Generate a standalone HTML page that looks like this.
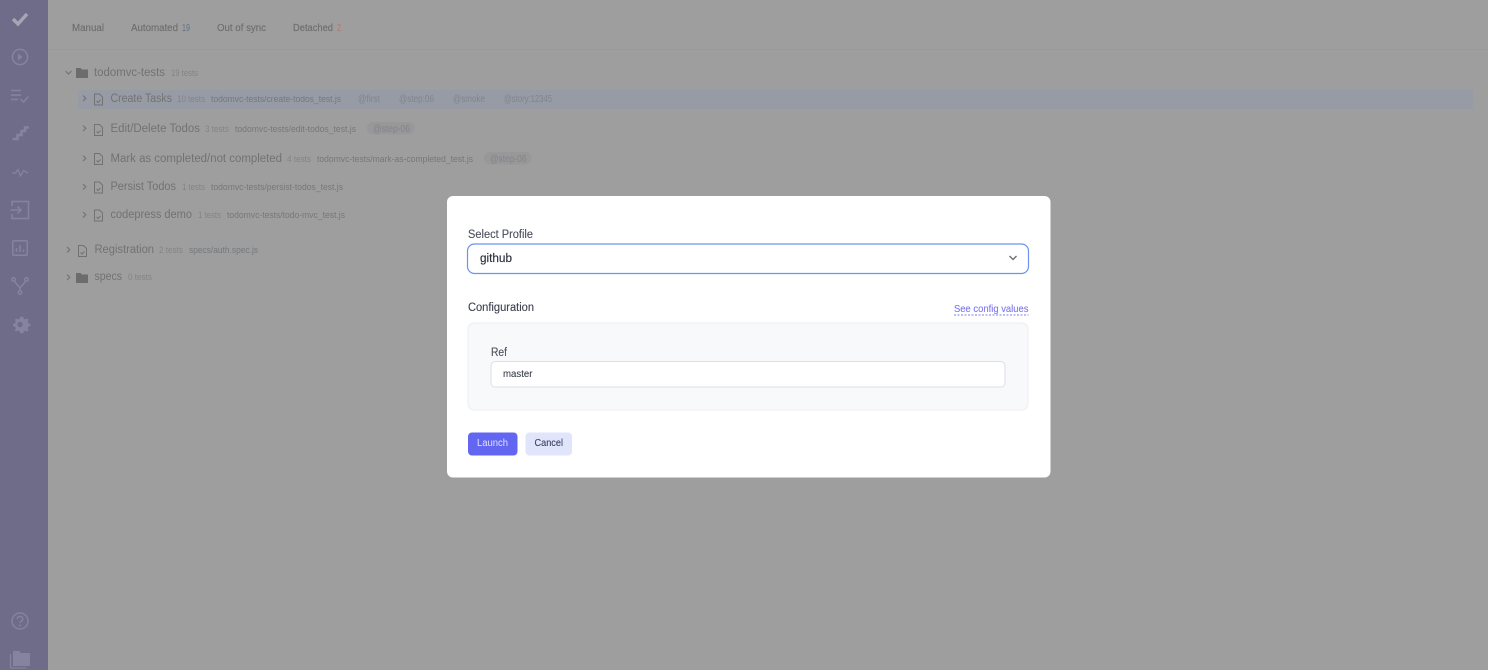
<!DOCTYPE html>
<html><head><meta charset="utf-8"><style>
html,body{margin:0;padding:0;width:1488px;height:670px;overflow:hidden;background:#9e9e9e}
svg{display:block;filter:blur(.3px)}
text{font-family:"Liberation Sans",sans-serif}
.tab{font-size:10px;fill:#6e6e6e;stroke:#6e6e6e;stroke-width:.15px}
.ttl{font-size:11.5px;fill:#727272}
.cnt{font-size:9px;fill:#848484}
.pth{font-size:9.5px;fill:#74787c}
.tag{font-size:10px;fill:#80848c}
.m{font-size:11.5px;fill:#4a4f5c;stroke:#4a4f5c;stroke-width:.12px}
</style></head><body>
<svg width="1488" height="670" viewBox="0 0 1488 670" xmlns="http://www.w3.org/2000/svg">
<rect width="1488" height="670" fill="#9e9e9e"/>
<rect width="48" height="670" fill="#6f6c8a"/>
<!-- sidebar icons -->
<path d="M13 19l5 5 9-10" fill="none" stroke="#a6a6b2" stroke-width="3.4"/>
<g fill="none" stroke="#85839d" stroke-width="1.5">
<circle cx="20" cy="57" r="7.6"/>
<path d="M18 53.500l4.500 3.500-4.500 3.500z" fill="#85839d" stroke="none"/>
<path d="M11 90.500h10M11 95h10M11 99.500h7M20.500 99l3 3 5-5.500"/>
<path d="M12.500 139h5v-4h4v-4h3.500v-3.500h4" stroke-width="2.500"/>
<path d="M12 173h3.500l2.500-3.500 2.500 6.500 3-5.500 4.500 2.500" stroke-width="1.300"/>
<path d="M12 206v-4.500h16.500v17h-16.500v-4.500"/>
<path d="M10.500 210h10M17.500 206.500l3.500 3.500-3.500 3.500"/>
<rect x="12.800" y="240.800" width="14.400" height="14.400" rx="1"/>
<path d="M16.500 252v-4M20 252v-7M23.500 252v-2.500"/>
<circle cx="13.500" cy="279.500" r="1.800"/><circle cx="26.500" cy="279.500" r="1.800"/><circle cx="20" cy="292.500" r="1.800"/>
<path d="M14.500 281.500l5.500 6.500 5.500-6.500M20 288v3"/>
<circle cx="20" cy="621" r="8"/>
<path d="M17.300 619c0-3.500 5.500-3.500 5.500 0 0 2-2.800 2-2.800 4"/>
</g>
<circle cx="20" cy="625.500" r="1" fill="#85839d"/>
<g transform="translate(20 325) scale(.88) translate(-18.500 -326)">
<path d="M20 316.500l2 0 .8 2.300 1.800.8 2.200-1 1.500 1.500-1 2.200.8 1.800 2.300.8v2.200l-2.300.8-.8 1.800 1 2.200-1.500 1.500-2.200-1-1.800.8-.8 2.300h-3l-.8-2.300-1.800-.8-2.200 1-1.500-1.500 1-2.200-.8-1.800-2.300-.8v-2.200l2.300-.8.8-1.800-1-2.200 1.500-1.500 2.200 1 1.800-.8.800-2.300zM18.500 322.500a3 3 0 1 0 .01 0z" fill="#85839d" fill-rule="evenodd"/>
</g>
<path d="M13 651h6l2 2h9v13h-17z" fill="#85839d"/>
<path d="M10.500 654v14h16" fill="none" stroke="#85839d" stroke-width="1.200"/>

<!-- tabs -->
<line x1="48" y1="49.500" x2="1488" y2="49.500" stroke="#999"/>
<text class="tab" x="72" y="31" textLength="32" lengthAdjust="spacingAndGlyphs">Manual</text>
<text class="tab" x="131" y="31" textLength="47" lengthAdjust="spacingAndGlyphs">Automated</text>
<text class="tab" x="182" y="31" textLength="8" lengthAdjust="spacingAndGlyphs" style="fill:#6a7a88;stroke:#6a7a88">19</text>
<text class="tab" x="217" y="31" textLength="49" lengthAdjust="spacingAndGlyphs">Out of sync</text>
<text class="tab" x="293" y="31" textLength="40" lengthAdjust="spacingAndGlyphs">Detached</text>
<text class="tab" x="337" y="31" textLength="4" lengthAdjust="spacingAndGlyphs" style="fill:#b47a7a;stroke:#b47a7a">2</text>

<!-- tree -->
<rect x="78" y="90" width="1395" height="19" fill="#979ba6"/>
<g fill="none" stroke="#757575" stroke-width="1.200">
<path d="M65.500 71l3 3 3-3"/>
<path d="M83 95.500l2.800 2.800-2.800 2.800M83 125.500l2.800 2.800-2.800 2.800M83 155.500l2.800 2.800-2.800 2.800M83 184l2.800 2.800-2.800 2.800M83 212l2.800 2.800-2.800 2.800"/>
<path d="M67 247l2.800 2.800-2.800 2.800M67 274.500l2.800 2.800-2.800 2.800"/>
</g>
<g fill="#6c6c6c">
<path d="M76 68h4.500l1.500 1.500h6v8.500h-12z"/>
<path d="M76 273h4.500l1.500 1.500h6v8.500h-12z"/>
</g>
<defs><g id="f" fill="none" stroke="#727272" stroke-width="1"><path d="M.5.500h5l3 3v8h-8z"/><path d="M2.500 7.500l1.500 1.500 2.500-2.500"/></g></defs>
<use href="#f" x="94" y="93.500"/>
<use href="#f" x="94" y="124"/>
<use href="#f" x="94" y="153"/>
<use href="#f" x="94" y="181.500"/>
<use href="#f" x="94" y="209.500"/>
<use href="#f" x="78" y="245"/>

<text class="ttl" x="94" y="76" textLength="71" lengthAdjust="spacingAndGlyphs">todomvc-tests</text>
<text class="cnt" x="171" y="76" textLength="27" lengthAdjust="spacingAndGlyphs">19 tests</text>

<text class="ttl" x="110.500" y="102" textLength="61.500" lengthAdjust="spacingAndGlyphs">Create Tasks</text>
<text class="cnt" x="177" y="102" textLength="28" lengthAdjust="spacingAndGlyphs">10 tests</text>
<text class="pth" x="211" y="102" textLength="130" lengthAdjust="spacingAndGlyphs">todomvc-tests/create-todos_test.js</text>
<text class="tag" x="358" y="102" textLength="22" lengthAdjust="spacingAndGlyphs">@first</text>
<text class="tag" x="399" y="102" textLength="35" lengthAdjust="spacingAndGlyphs">@step:06</text>
<text class="tag" x="453" y="102" textLength="32" lengthAdjust="spacingAndGlyphs">@smoke</text>
<text class="tag" x="504" y="102" textLength="48" lengthAdjust="spacingAndGlyphs">@story:12345</text>

<text class="ttl" x="110.500" y="132" textLength="89.500" lengthAdjust="spacingAndGlyphs">Edit/Delete Todos</text>
<text class="cnt" x="205" y="132" textLength="24" lengthAdjust="spacingAndGlyphs">3 tests</text>
<text class="pth" x="235" y="132" textLength="121" lengthAdjust="spacingAndGlyphs">todomvc-tests/edit-todos_test.js</text>
<rect x="367" y="122" width="48" height="12.500" rx="6" fill="#989898"/>
<text class="tag" x="373" y="132" textLength="37" lengthAdjust="spacingAndGlyphs">@step-06</text>

<text class="ttl" x="110.500" y="162" textLength="171.500" lengthAdjust="spacingAndGlyphs">Mark as completed/not completed</text>
<text class="cnt" x="287" y="162" textLength="24" lengthAdjust="spacingAndGlyphs">4 tests</text>
<text class="pth" x="317" y="162" textLength="156" lengthAdjust="spacingAndGlyphs">todomvc-tests/mark-as-completed_test.js</text>
<rect x="484" y="152" width="47.500" height="12.500" rx="6" fill="#989898"/>
<text class="tag" x="490" y="162" textLength="36.500" lengthAdjust="spacingAndGlyphs">@step-06</text>

<text class="ttl" x="110.500" y="190" textLength="65.500" lengthAdjust="spacingAndGlyphs">Persist Todos</text>
<text class="cnt" x="182" y="190" textLength="23" lengthAdjust="spacingAndGlyphs">1 tests</text>
<text class="pth" x="211" y="190" textLength="132" lengthAdjust="spacingAndGlyphs">todomvc-tests/persist-todos_test.js</text>

<text class="ttl" x="110.500" y="218" textLength="81.500" lengthAdjust="spacingAndGlyphs">codepress demo</text>
<text class="cnt" x="198" y="218" textLength="23" lengthAdjust="spacingAndGlyphs">1 tests</text>
<text class="pth" x="227" y="218" textLength="118" lengthAdjust="spacingAndGlyphs">todomvc-tests/todo-mvc_test.js</text>

<text class="ttl" x="94.500" y="253" textLength="59.500" lengthAdjust="spacingAndGlyphs">Registration</text>
<text class="cnt" x="159" y="253" textLength="24" lengthAdjust="spacingAndGlyphs">2 tests</text>
<text class="pth" x="189" y="253" textLength="69" lengthAdjust="spacingAndGlyphs">specs/auth.spec.js</text>

<text class="ttl" x="94.500" y="280" textLength="27.500" lengthAdjust="spacingAndGlyphs">specs</text>
<text class="cnt" x="128" y="280" textLength="24" lengthAdjust="spacingAndGlyphs">0 tests</text>

<!-- modal -->
<rect x="447" y="196" width="603.500" height="281.500" rx="6" fill="#fff"/>
<text class="m" x="468" y="238" textLength="65" lengthAdjust="spacingAndGlyphs">Select Profile</text>
<rect x="467.500" y="244" width="561" height="29.500" rx="7" fill="#fff" stroke="#6c93ee" stroke-width="1.200"/>
<text x="480" y="262" textLength="32" lengthAdjust="spacingAndGlyphs" style="font-size:11.500px;fill:#2b2f3a;stroke:#2b2f3a;stroke-width:.15px">github</text>
<path d="M1009.500 256l3.500 3.500 3.500-3.500" fill="none" stroke="#666a72" stroke-width="1.300"/>

<text class="m" x="468" y="311" textLength="66" lengthAdjust="spacingAndGlyphs" style="fill:#3d4250;stroke:#3d4250">Configuration</text>
<text x="954" y="312" textLength="74.500" lengthAdjust="spacingAndGlyphs" style="font-size:10.500px;fill:#7f78f0;stroke:#7f78f0;stroke-width:.12px">See config values</text>
<line x1="954" y1="315" x2="1028.500" y2="315" stroke="#7f78f0" stroke-width="1" stroke-dasharray="2 1.500"/>

<rect x="468" y="323" width="560" height="87" rx="6" fill="#f8f9fb" stroke="#eceef2"/>
<text class="m" x="491" y="356" textLength="16" lengthAdjust="spacingAndGlyphs">Ref</text>
<rect x="491" y="361.500" width="514" height="25.500" rx="4" fill="#fff" stroke="#dcdfe6"/>
<text x="503" y="377" textLength="29.500" lengthAdjust="spacingAndGlyphs" style="font-size:10px;fill:#3a3f4c;stroke:#3a3f4c;stroke-width:.1px">master</text>

<rect x="468" y="432.500" width="49.500" height="23" rx="4" fill="#6366f1"/>
<text x="477" y="446" textLength="31" lengthAdjust="spacingAndGlyphs" style="font-size:10px;fill:#dfe0fd">Launch</text>
<rect x="525.500" y="432.500" width="46.500" height="23" rx="4" fill="#e0e5fc"/>
<text x="534.500" y="446" textLength="28.500" lengthAdjust="spacingAndGlyphs" style="font-size:10px;fill:#3a3f5c;stroke:#3a3f5c;stroke-width:.1px">Cancel</text>
</svg>
</body></html>
